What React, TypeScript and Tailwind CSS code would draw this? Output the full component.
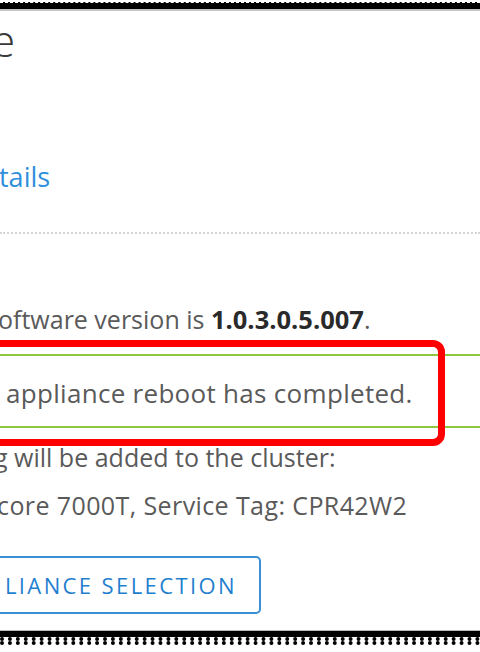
import React from "react";

export default function App() {
  const font = { fontFamily: '"Open Sans", "Noto Sans", sans-serif' };
  return (
    <div
      className="relative w-[480px] h-[652px] bg-white overflow-hidden flex flex-col"
      style={font}
    >
      {/* top black frame */}
      <div className="h-[2px] bg-white shrink-0" />
      <div className="h-[7px] bg-black shrink-0 border-t border-dashed border-white" />
      <div className="h-[2px] bg-[#c4c4c4] shrink-0" />

      {/* title */}
      <div className="mt-[7px] h-[44px] flex overflow-visible shrink-0">
        <span className="text-[44px] leading-[44px] font-light text-[#3a3a3a] ml-[-9px]">e</span>
      </div>

      {/* details link */}
      <div className="mt-[100px] h-[30px] flex shrink-0">
        <span className="text-[27px] leading-[30px] text-[#2f8fdc] ml-[-1px]">tails</span>
      </div>

      {/* dotted separator */}
      <div className="mt-[40px] h-[3px] border-t-[2px] border-dotted border-[#d6d6d6] shrink-0" />

      {/* version */}
      <div className="mt-[69px] h-[30px] flex items-baseline shrink-0 leading-[30px] text-[#5a5a5a] whitespace-nowrap">
        <span className="ml-[-2px] text-[25px]">oftware version is&nbsp;</span>
        <span className="font-bold text-[25.5px] text-[#2a2a2a]">1.0.3.0.5.007</span>
        <span className="text-[25px]">.</span>
      </div>

      {/* success alert */}
      <div className="mt-[20px] h-[74px] border-y-2 border-[#8dc63f] flex items-center pt-[3px] shrink-0">
        <span className="text-[26px] leading-[30px] tracking-[0.3px] text-[#5a5a5a] ml-[6px] whitespace-nowrap">
          appliance reboot has completed.
        </span>
      </div>

      {/* cluster */}
      <div className="mt-[14px] h-[30px] text-[25px] leading-[30px] text-[#5a5a5a] whitespace-nowrap shrink-0">
        <span className="ml-[-6px]">g will be added to the cluster:</span>
      </div>
      <div className="mt-[18px] h-[30px] text-[25px] leading-[30px] tracking-[0.4px] text-[#5a5a5a] whitespace-nowrap shrink-0">
        <span className="ml-[-3px]">core 7000T, Service Tag: CPR42W2</span>
      </div>

      {/* button */}
      <div className="mt-[36px] flex shrink-0">
        <div className="ml-[-10px] w-[271px] h-[58px] border-2 border-[#3a8fd6] rounded-[5px] flex items-center justify-end pr-[22px] shrink-0">
          <span className="text-[22px] leading-[26px] tracking-[2.4px] text-[#1f7fcf] whitespace-nowrap">
            LIANCE SELECTION
          </span>
        </div>
      </div>

      <div className="flex-1" />
      {/* bottom black frame */}
      <div className="h-[1px] bg-[#bbbbbb] shrink-0" />
      <div className="h-[6px] bg-black shrink-0" />
      <div className="h-[8px] border-t-[4px] border-b-[4px] border-dotted border-black shrink-0" />
      <div className="h-[7px] bg-white shrink-0" />

      {/* red annotation box */}
      <div className="absolute left-[-40px] top-[340px] w-[485px] h-[106px] border-[7px] border-[#ff0000] rounded-[12px] pointer-events-none" />
    </div>
  );
}
